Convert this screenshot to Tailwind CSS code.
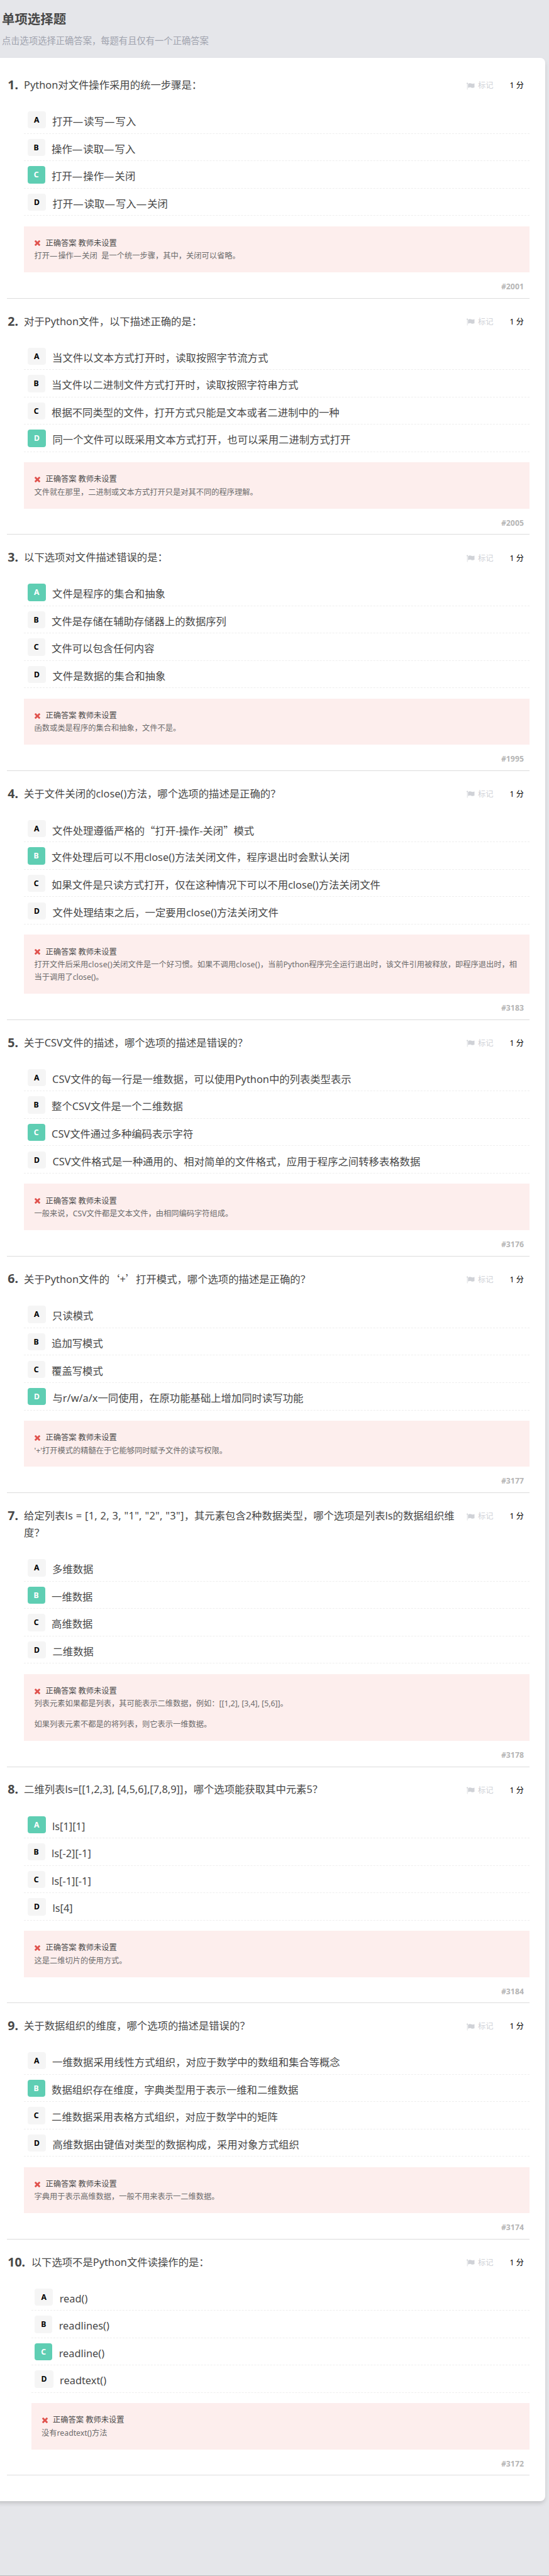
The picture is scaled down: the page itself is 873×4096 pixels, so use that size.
<!DOCTYPE html>
<html lang="zh-CN">
<head>
<meta charset="utf-8">
<title>单项选择题</title>
<script src="https://cdn.jsdelivr.net/npm/@tailwindcss/browser@4"></script>
</head>
<body class="bg-[#e5e6ea] font-['Noto_Sans','Noto_Sans_CJK_SC',sans-serif] text-[#484848]">
<div class="flex h-[4096px] w-[873px] flex-col overflow-hidden border-b border-[#bcbcbe]">
  <header class="h-[91.6px] shrink-0 pl-[3px] pt-[16px] whitespace-nowrap">
    <h1 class="text-[20.43px] leading-[28px] font-bold">单项选择题</h1>
    <p class="mt-[7px] text-[14.3px] leading-[28px] text-[#a0a3ae]">点击选项选择正确答案，每题有且仅有一个正确答案</p>
  </header>
  <main id="card" class="-ml-[10px] h-[3885.8px] w-[876.5px] shrink-0 rounded-[8px] bg-white pt-[7.6px] pr-[24.6px] pl-[21.4px] shadow-[0_4px_7px_-1px_rgba(0,0,0,0.17)]"></main>
</div>
<script>
const D = `<span class="tracking-[1.2px]">—</span>`;
const q = s => `<span class="font-['Noto_Sans_CJK_SC']">${s}</span>`;
const wide = s => `<span class="tracking-[0.32px]">${s}</span>`;
const questions = [
  ['Python对文件操作采用的统一步骤是：', [`打开${D}读写${D}写入`, `操作${D}读取${D}写入`, `打开${D}操作${D}关闭`, `打开${D}读取${D}写入${D}关闭`], 'C', [`打开${D}操作${D}关闭&nbsp; 是一个统一步骤，其中，关闭可以省略。`], '2001'],
  ['对于Python文件，以下描述正确的是：', ['当文件以文本方式打开时，读取按照字节流方式', '当文件以二进制文件方式打开时，读取按照字符串方式', '根据不同类型的文件，打开方式只能是文本或者二进制中的一种', '同一个文件可以既采用文本方式打开，也可以采用二进制方式打开'], 'D', ['文件就在那里，二进制或文本方式打开只是对其不同的程序理解。'], '2005'],
  ['以下选项对文件描述错误的是：', ['文件是程序的集合和抽象', '文件是存储在辅助存储器上的数据序列', '文件可以包含任何内容', '文件是数据的集合和抽象'], 'A', ['函数或类是程序的集合和抽象，文件不是。'], '1995'],
  ['关于文件关闭的close()方法，哪个选项的描述是正确的？', [`文件处理遵循严格的${q('“')}打开-操作-关闭${q('”')}模式`, '文件处理后可以不用close()方法关闭文件，程序退出时会默认关闭', '如果文件是只读方式打开，仅在这种情况下可以不用close()方法关闭文件', '文件处理结束之后，一定要用close()方法关闭文件'], 'B', [`打开文件后采用${wide('close()')}关闭文件是一个好习惯。如果不调用${wide('close()')}，当前Python程序完全运行退出时，该文件引用被释放，即程序退出时，相<br>当于调用了close()。`], '3183'],
  ['关于CSV文件的描述，哪个选项的描述是错误的？', ['CSV文件的每一行是一维数据，可以使用Python中的列表类型表示', '整个CSV文件是一个二维数据', 'CSV文件通过多种编码表示字符', 'CSV文件格式是一种通用的、相对简单的文件格式，应用于程序之间转移表格数据'], 'C', ['一般来说，CSV文件都是文本文件，由相同编码字符组成。'], '3176'],
  [`关于Python文件的${q('‘')}+${q('’')}打开模式，哪个选项的描述是正确的？`, ['只读模式', '追加写模式', '覆盖写模式', '与r/w/a/x一同使用，在原功能基础上增加同时读写功能'], 'D', ["'+'打开模式的精髓在于它能够同时赋予文件的读写权限。"], '3177'],
  [`给定列表${wide('ls = [1, 2, 3, "1", "2", "3"]')}，其元素包含2种数据类型，哪个选项是列表ls的数据组织维<br>度？`, ['多维数据', '一维数据', '高维数据', '二维数据'], 'B', ['列表元素如果都是列表，其可能表示二维数据，例如：[[1,2], [3,4], [5,6]]。', '如果列表元素不都是的将列表，则它表示一维数据。'], '3178'],
  ['二维列表ls=[[1,2,3], [4,5,6],[7,8,9]]，哪个选项能获取其中元素5？', ['ls[1][1]', 'ls[-2][-1]', 'ls[-1][-1]', 'ls[4]'], 'A', ['这是二维切片的使用方式。'], '3184'],
  ['关于数据组织的维度，哪个选项的描述是错误的？', ['一维数据采用线性方式组织，对应于数学中的数组和集合等概念', '数据组织存在维度，字典类型用于表示一维和二维数据', '二维数据采用表格方式组织，对应于数学中的矩阵', '高维数据由键值对类型的数据构成，采用对象方式组织'], 'B', ['字典用于表示高维数据，一般不用来表示一二维数据。'], '3174'],
  ['以下选项不是Python文件读操作的是：', ['read()', 'readlines()', 'readline()', 'readtext()'], 'C', ['没有readtext()方法'], '3172'],
];
const badgeWidth = { A: 'w-[29.2px]', B: 'w-[28.2px]', C: 'w-[28.2px]', D: 'w-[29.6px]' };
document.getElementById('card').innerHTML = questions.map(([title, options, chosen, notes, id], i) => `
  <section class="flex border-b border-[#dcdcdc] pt-[21.8px] whitespace-nowrap">
    <div class="${i === 9 ? 'w-[38.3px]' : 'w-[26.7px]'} shrink-0 pl-[0.8px] text-[19.6px] leading-[27px] font-bold">${i + 1}.</div>
    <div class="min-w-0 grow">
      <div class="flex justify-between pt-[1px]">
        <h2 class="text-[16.35px] leading-[27.25px]">${title}</h2>
        <div class="flex h-[27.25px] items-center pt-[2px] pr-[9px] text-[12.26px]">
          <svg class="mr-[4.5px] h-[12px] w-[13px] fill-[#d0d2d7]" viewBox="0 0 26 24"><circle cx="2.200" cy="3" r="2.200"/><path d="M1.500 3h1.400v20H1.500zM4.500 5c4-3 7-3 10.500-1.300 3.500 1.500 6 1 10-.7v13c-4 2-7 2.200-10.500.5-3.500-1.500-6-1-10 1z"/></svg>
          <span class="text-[#d0d2d7]">标记</span>
          <span class="ml-[26px] text-black">1 分</span>
        </div>
      </div>
      <ul class="mt-[19.7px]">
        ${options.map((text, n) => {
          const k = 'ABCD'[n];
          return `<li class="flex h-[43.59px] items-start border-b border-dashed border-[#eee] pt-[8.2px] pl-[5.5px]">
          <span class="${badgeWidth[k]} ${k === chosen ? 'bg-[#5fceb3] text-white' : 'bg-[#f5f5f5] text-black'} mr-[10.3px] h-[27.25px] rounded-[4px] text-center text-[12.26px] leading-[27px] font-bold">${k}</span>
          <span class="text-[16.35px] leading-[32px]">${text}</span>
        </li>`;
        }).join('')}
      </ul>
      <div class="mt-[16.35px] space-y-[12.3px] bg-[#fdeeed] px-[16.35px] pt-[17.2px] pb-[15.5px] text-[12.26px] leading-[20.43px] text-[#6c6c6c]">
        <div>
          <div class="flex items-center text-[#484848]"><svg class="mr-[8.3px] ml-[0.7px] h-[9px] w-[9px] fill-[#e0524d]" viewBox="110 366 1188 1188"><path d="M1298 1322q0 40-28 68l-136 136q-28 28-68 28t-68-28l-294-294-294 294q-28 28-68 28t-68-28l-136-136q-28-28-28-68t28-68l294-294-294-294q-28-28-28-68t28-68l136-136q28-28 68-28t68 28l294 294 294-294q28-28 68-28t68 28l136 136q28 28 28 68t-28 68l-294 294 294 294q28 28 28 68z"/></svg>正确答案 教师未设置</div>
          <p>${notes[0]}</p>
        </div>
        ${notes.slice(1).map(t => `<p>${t}</p>`).join('')}
      </div>
      <div class="h-[40.64px] pt-[13px] pr-[9px] text-right text-[12.26px] leading-[20px] font-bold text-[#b5b5b5]">#${id}</div>
    </div>
  </section>`).join('');
</script>
</body>
</html>
